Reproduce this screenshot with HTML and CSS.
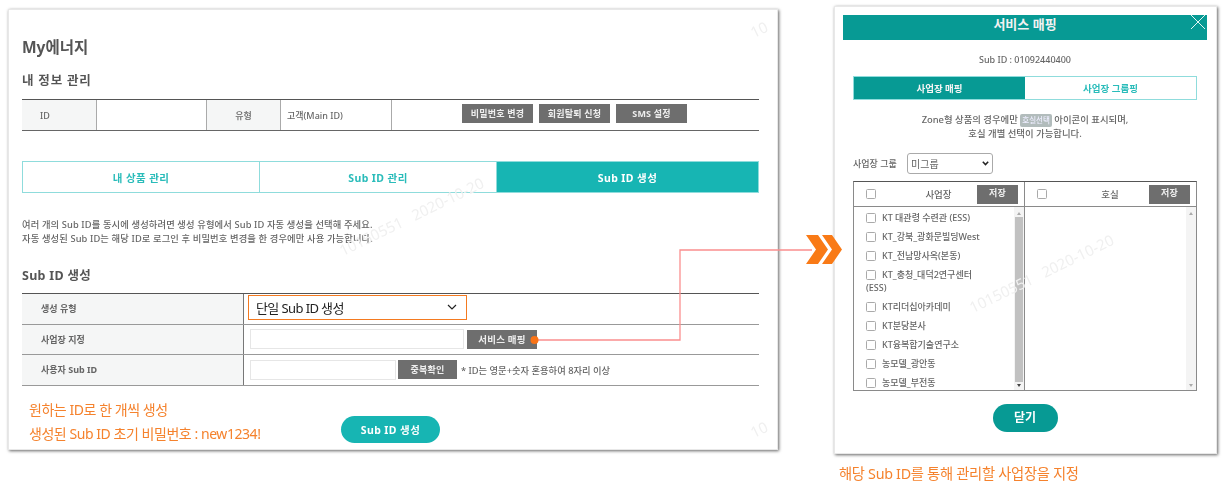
FILE: index.html
```html
<!DOCTYPE html>
<html lang="ko">
<head>
<meta charset="UTF-8"/>
<title>Sub ID 생성</title>
<link rel="stylesheet" href="styles.css">
</head>
<body>
<div class="canvas">

<section class="win win-main">
    <h1 class="page-title">My에너지</h1>
    <h2 class="sec-title">내 정보 관리</h2>
    <div class="info-row">
        <div class="th th-id">ID</div>
        <div class="td td-id"></div>
        <div class="th th-type">유형</div>
        <div class="td td-type">고객(Main ID)</div>
        <div class="td td-btns">
            <span class="btn btn-info">비밀번호 변경</span>
            <span class="btn btn-info">회원탈퇴 신청</span>
            <span class="btn btn-info">SMS 설정</span>
        </div>
    </div>
    <div class="tabs">
        <div class="tab tab-a">내 상품 관리</div>
        <div class="tab tab-b">Sub ID 관리</div>
        <div class="tab tab-c on">Sub ID 생성</div>
    </div>
    <p class="desc">여러 개의 Sub ID를 동시에 생성하려면 생성 유형에서 Sub ID 자동 생성을 선택해 주세요.<br>
    자동 생성된 Sub ID는 해당 ID로 로그인 후 비밀번호 변경을 한 경우에만 사용 가능합니다.</p>
    <h2 class="sec-title sec-sub">Sub ID 생성</h2>
    <div class="form">
        <div class="form-row">
            <div class="form-th">생성 유형</div>
            <div class="form-td">
                <div class="fake-select">
                    <span>단일 Sub ID 생성</span>
                    <svg class="sel-arrow" width="10" height="6" viewBox="0 0 10 6"><path d="M1 1l4 4 4-4" fill="none" stroke="#222" stroke-width="1.2"/></svg>
                </div>
            </div>
        </div>
        <div class="form-row">
            <div class="form-th">사업장 지정</div>
            <div class="form-td">
                <div class="input input-long"></div>
                <span class="btn btn-map">서비스 매핑</span>
            </div>
        </div>
        <div class="form-row">
            <div class="form-th">사용자 Sub ID</div>
            <div class="form-td">
                <div class="input input-short"></div>
                <span class="btn btn-dup">중복확인</span>
                <span class="id-note">* ID는 영문+숫자 혼용하여 8자리 이상</span>
            </div>
        </div>
    </div>
    <div class="foot">
        <p class="orange-note">원하는 ID로 한 개씩 생성<br>생성된 Sub ID 초기 비밀번호 : new1234!</p>
        <span class="pill pill-create">Sub ID 생성</span>
    </div>
</section>

<section class="win win-map">
    <header class="map-head">
        <span>서비스 매핑</span>
        <svg class="map-x" width="16" height="15" viewBox="0 0 16 15"><path d="M1 0l14 14M15 0L1 14" stroke="#e4f4f3" stroke-width="1" fill="none"/></svg>
    </header>
    <div class="map-body">
        <p class="sub-id">Sub ID : 01092440400</p>
        <div class="map-tabs">
            <div class="map-tab on">사업장 매핑</div>
            <div class="map-tab">사업장 그룹핑</div>
        </div>
        <p class="map-desc">Zone형 상품의 경우에만 <span class="room-chip">호실선택</span> 아이콘이 표시되며,<br>호실 개별 선택이 가능합니다.</p>
        <div class="group-row">
            <span class="group-label">사업장 그룹</span>
            <div class="group-select">미그룹
                <svg width="7" height="5" viewBox="0 0 7 5"><path d="M.8.8l2.7 2.8L6.2.8" fill="none" stroke="#222" stroke-width="1.5"/></svg>
            </div>
        </div>
        <div class="map-table">
            <div class="col col-left">
                <div class="col-head">
                    <i class="chk"></i><span class="col-name">사업장</span><span class="btn btn-save">저장</span>
                </div>
                <div class="col-list">
                    <ul class="sites">
                        <li><i class="chk"></i>KT 대관령 수련관 (ESS)</li>
                        <li><i class="chk"></i>KT_강북_광화문빌딩West</li>
                        <li><i class="chk"></i>KT_전남망사옥(본동)</li>
                        <li><i class="chk"></i>KT_충청_대덕2연구센터 (ESS)</li>
                        <li><i class="chk"></i>KT리더십아카데미</li>
                        <li><i class="chk"></i>KT분당본사</li>
                        <li><i class="chk"></i>KT융복합기술연구소</li>
                        <li><i class="chk"></i>농모델_광안동</li>
                        <li><i class="chk"></i>농모델_부전동</li>
                    </ul>
                    <div class="scroll"><b class="up"></b><div class="thumb"></div><b class="down dark"></b></div>
                </div>
            </div>
            <div class="col col-right">
                <div class="col-head">
                    <i class="chk"></i><span class="col-name">호실</span><span class="btn btn-save">저장</span>
                </div>
                <div class="col-list">
                    <ul class="sites"></ul>
                    <div class="scroll"><b class="up"></b><b class="down"></b></div>
                </div>
            </div>
        </div>
        <div class="close-wrap"><span class="pill pill-close">닫기</span></div>
    </div>
</section>

<p class="caption">해당 Sub ID를 통해 관리할 사업장을 지정</p>

<span class="wm wm-1">10150551 &nbsp; 2020-10-20</span>
<span class="wm wm-2">10150551 &nbsp; 2020-10-20</span>
<span class="wm wm-3">10</span>
<span class="wm wm-4">10</span>

<svg class="connector" width="1224" height="491" viewBox="0 0 1224 491">
    <path d="M535 340H680V250H812" fill="none" stroke="#fa8f8f" stroke-width="1.3"/>
    <circle cx="534.500" cy="340" r="4" fill="#f97316"/>
    <path d="M806 235h12l10 14.500-10 14.500h-12l10-14.500z" fill="#f97a16"/>
    <path d="M822 235h10l10 14.500-10 14.500h-10l10-14.500z" fill="#f97a16"/>
</svg>

</div>
</body>
</html>
```

FILE: styles.css
```css
* {
    box-sizing: border-box;
}
html, body {
    margin: 0;
    background: #fff;
}
body {
    font-family: "Noto Sans", "Noto Sans CJK KR", sans-serif;
    color: #666;
}
p, h1, h2, ul {
    margin: 0;
    padding: 0;
}
ul {
    list-style: none;
}
.canvas {
    position: relative;
    width: 1224px;
    height: 491px;
    overflow: hidden;
    filter: blur(0.45px);
}

/* windows */
.win {
    position: absolute;
    background: #fff;
    border: 1px solid #e8e8e8;
    box-shadow: 1px 1px 3px #666;
}
.win-main {
    left: 8px;
    top: 9px;
    width: 770px;
    height: 441px;
    padding: 27px 18px 0 13px;
}
.win-map {
    left: 834px;
    top: 6px;
    width: 383px;
    height: 448px;
    padding: 8px 0 0 8px;
}

/* left window */
.page-title {
    font-size: 15.500px;
    line-height: 20px;
    font-weight: 700;
    color: #555;
}
.sec-title {
    margin-top: 16px;
    font-size: 12.500px;
    line-height: 16px;
    font-weight: 700;
    color: #555;
    letter-spacing: 0.8px;
}
.info-row {
    display: flex;
    height: 32px;
    margin-top: 10px;
    border-top: 1.5px solid #555;
    border-bottom: 1px solid #666;
    font-size: 9px;
    font-weight: 500;
}
.th, .td {
    display: flex;
    align-items: center;
    border-right: 1px solid #aaa;
}
.th {
    background: #f5f6f6;
}
.th-id {
    width: 75px;
    padding-left: 18px;
}
.td-id {
    width: 110px;
}
.th-type {
    width: 74px;
    justify-content: center;
}
.td-type {
    width: 111px;
    padding-left: 6px;
}
.td-btns {
    flex: 1;
    border-right: 0;
    padding: 0 0 3px 70px;
    gap: 6px;
}
.btn {
    display: inline-flex;
    align-items: center;
    justify-content: center;
    background: #6e6e6e;
    color: #eee;
    font-size: 9px;
    font-weight: 700;
    letter-spacing: 0.2px;
}
.btn-info {
    width: 71px;
    height: 19px;
}
.tabs {
    display: flex;
    height: 32px;
    margin-top: 30px;
    border: 1px solid #8fdcdc;
    font-size: 10.500px;
    font-weight: 700;
    color: #2abcba;
    letter-spacing: 0.4px;
}
.tab {
    display: flex;
    align-items: center;
    justify-content: center;
}
.tab-a, .tab-b {
    width: 237px;
    border-right: 1px solid #8fdcdc;
}
.tab-c {
    flex: 1;
}
.tab.on {
    background: #17b5b3;
    color: #fff;
}
.desc {
    margin-top: 25px;
    font-size: 9.300px;
    line-height: 14px;
    font-weight: 500;
    color: #666;
    letter-spacing: 0.12px;
}
.sec-sub {
    margin-top: 22px;
    font-size: 12.500px;
    letter-spacing: 0.3px;
}
.form {
    margin-top: 9px;
    border-top: 1.5px solid #555;
}
.form-row {
    display: flex;
    height: 30.500px;
    border-bottom: 1px solid #999;
}
.form-th {
    width: 222px;
    padding: 0 0 0 19px;
    display: flex;
    align-items: center;
    background: #f5f6f6;
    border-right: 1px solid #777;
    font-size: 9px;
    font-weight: 700;
    color: #666;
}
.form-td {
    flex: 1;
    display: flex;
    align-items: center;
}
.fake-select {
    display: flex;
    align-items: center;
    justify-content: space-between;
    width: 219px;
    height: 25px;
    margin: -3px 0 0 4px;
    padding: 0 9px 0 7px;
    border: 1px solid #f47a20;
    font-size: 13px;
    color: #222;
    letter-spacing: -0.6px;
}
.input {
    height: 20px;
    margin-left: 6px;
    border: 1px solid #e6e6e6;
}
.input-long {
    width: 214px;
}
.input-short {
    width: 146px;
}
.btn-map {
    width: 70px;
    height: 19px;
    margin-left: 3px;
    font-size: 9.500px;
}
.btn-dup {
    width: 59px;
    height: 19px;
    margin-left: 2px;
}
.id-note {
    margin-left: 4px;
    font-size: 9.300px;
    font-weight: 500;
}
.foot {
    display: flex;
    margin-top: 12px;
}
.orange-note {
    width: 319px;
    padding-left: 7px;
    font-size: 14px;
    line-height: 24px;
    color: #f5822d;
    letter-spacing: -0.45px;
    white-space: nowrap;
}
.pill {
    display: flex;
    align-items: center;
    justify-content: center;
    border-radius: 14px;
    color: #fff;
    font-weight: 700;
}
.pill-create {
    width: 99px;
    height: 27px;
    margin-top: 18px;
    background: #17b5b3;
    font-size: 10.500px;
    letter-spacing: 0.4px;
}

/* right window */
.map-head {
    position: relative;
    width: 364px;
    height: 25px;
    background: #079a94;
    color: #f2f2f2;
    font-size: 13px;
    line-height: 18px;
    font-weight: 700;
    text-align: center;
}
.map-x {
    position: absolute;
    right: 1px;
    top: 0;
}
.map-body {
    width: 344px;
    margin-left: 10px;
}
.sub-id {
    margin-top: 13px;
    font-size: 9px;
    line-height: 14px;
    font-weight: 500;
    text-align: center;
}
.map-tabs {
    display: flex;
    height: 24px;
    margin-top: 9px;
    border: 1px solid #8fdcdc;
    font-size: 9.500px;
    font-weight: 700;
    color: #2abcba;
}
.map-tab {
    flex: 1;
    display: flex;
    align-items: center;
    justify-content: center;
}
.map-tab.on {
    background: #079a94;
    color: #f5f5f5;
}
.map-desc {
    margin-top: 13px;
    font-size: 9.400px;
    line-height: 14px;
    font-weight: 500;
    text-align: center;
}
.room-chip {
    display: inline-block;
    padding: 0 2px;
    line-height: 13px;
    border-radius: 2px;
    background: #b2bcbc;
    color: #eef;
    font-size: 7.500px;
}
.group-row {
    display: flex;
    align-items: center;
    height: 21px;
    margin-top: 12px;
}
.group-label {
    width: 54px;
    font-size: 9px;
    font-weight: 500;
    white-space: nowrap;
}
.group-select {
    display: flex;
    align-items: center;
    justify-content: space-between;
    width: 86px;
    height: 21px;
    padding: 0 3px 0 3px;
    border: 1px solid #aaa;
    border-radius: 3px;
    font-size: 10px;
}
.map-table {
    display: flex;
    height: 210px;
    margin-top: 7px;
    border: 1px solid #8a8a8a;
    border-top: 1.5px solid #555;
}
.col {
    display: flex;
    flex-direction: column;
}
.col-left {
    width: 171px;
    border-right: 1px solid #8a8a8a;
}
.col-right {
    flex: 1;
}
.col-head {
    display: flex;
    align-items: center;
    height: 25px;
    padding: 0 6px 0 12px;
    border-bottom: 1px solid #8a8a8a;
    font-size: 9.500px;
    font-weight: 500;
}
.col-name {
    flex: 1;
    text-align: center;
    padding-left: 18px;
}
.btn-save {
    width: 41px;
    height: 19px;
    padding-bottom: 4px;
}
.chk {
    display: inline-block;
    flex: none;
    width: 10px;
    height: 10px;
    margin-right: 6px;
    border: 1px solid #aaa;
    border-radius: 1.500px;
    vertical-align: -2px;
}
.col-list {
    flex: 1;
    display: flex;
    min-height: 0;
}
.sites {
    flex: 1;
    padding-top: 1px;
    overflow: hidden;
    font-size: 9px;
    font-weight: 500;
    line-height: 13px;
}
.sites li {
    width: 125px;
    margin-left: 12px;
    padding: 3px 0;
}
.scroll {
    display: flex;
    flex-direction: column;
    align-items: center;
    justify-content: space-between;
    width: 10px;
    padding: 5px 0 3px;
    background: #f4f4f4;
}
.thumb {
    flex: 1;
    width: 8px;
    margin: 2px 0;
    background: #c1c1c1;
}
.up, .down {
    width: 0;
    height: 0;
    border-left: 2.500px solid transparent;
    border-right: 2.500px solid transparent;
}
.up {
    border-bottom: 3px solid #aaa;
}
.down {
    border-top: 3px solid #aaa;
}
.down.dark {
    border-top-color: #444;
}
.close-wrap {
    display: flex;
    justify-content: center;
    margin-top: 13px;
}
.pill-close {
    width: 65px;
    height: 28px;
    padding-bottom: 3px;
    background: #079a94;
    font-size: 12px;
}

/* stuff on the canvas */
.caption {
    position: absolute;
    left: 839px;
    top: 464px;
    font-size: 14.300px;
    line-height: 20px;
    color: #f5822d;
    letter-spacing: -0.3px;
    white-space: nowrap;
}
.wm {
    position: absolute;
    font-size: 15px;
    line-height: 18px;
    color: #f0f0f0;
    white-space: nowrap;
    transform: rotate(-26deg);
    transform-origin: left bottom;
}
.wm-1 {
    left: 344px;
    top: 241px;
}
.wm-2 {
    left: 974px;
    top: 298px;
}
.wm-3 {
    left: 755px;
    top: 23px;
}
.wm-4 {
    left: 755px;
    top: 423px;
}
.connector {
    position: absolute;
    left: 0;
    top: 0;
}
```
